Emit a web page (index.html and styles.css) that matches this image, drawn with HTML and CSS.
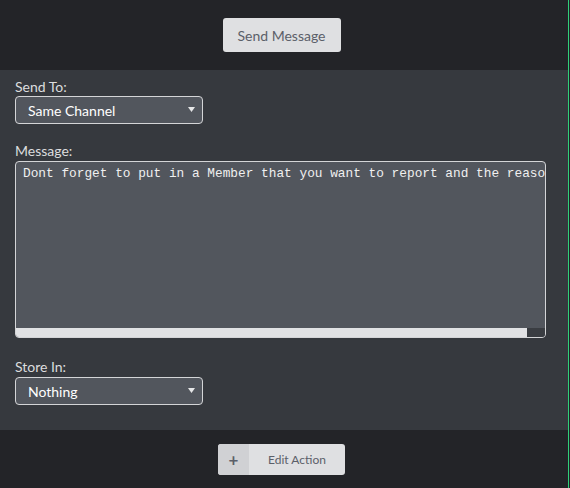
FILE: index.html
```html
<!DOCTYPE html>
<html>
<head>
<meta charset="utf-8">
<link rel="stylesheet" href="styles.css">
</head>
<body>
<div class="page">
  <header class="top">
    <button class="btn send">Send Message</button>
  </header>
  <main class="form">
    <label class="label">Send To:</label>
    <div class="select-wrap">
      <select class="select"><option>Same Channel</option></select>
      <svg class="arrow" width="7" height="5" viewBox="0 0 7 5"><path d="M0 0H7L3.5 5Z" fill="#e6e7e8"/></svg>
    </div>
    <label class="label msg-label">Message:</label>
    <div class="message">
      <div class="message-text">Dont forget to put in a Member that you want to report and the reason why you want to report them.</div>
      <div class="hscroll"><div class="hscroll-track"></div><div class="hscroll-corner"></div></div>
    </div>
    <label class="label store-label">Store In:</label>
    <div class="select-wrap">
      <select class="select"><option>Nothing</option></select>
      <svg class="arrow" width="7" height="5" viewBox="0 0 7 5"><path d="M0 0H7L3.5 5Z" fill="#e6e7e8"/></svg>
    </div>
  </main>
  <footer class="bottom">
    <button class="btn edit"><span class="plus">+</span><span class="edit-text">Edit Action</span></button>
  </footer>
</div>
</body>
</html>
```
FILE: styles.css
```css
html, body {
  margin: 0;
  padding: 0;
}
body {
  width: 570px;
  height: 488px;
  background: #232428;
  font-family: Lato, "Open Sans", sans-serif;
  overflow: hidden;
}
.page {
  width: 568px;
  height: 488px;
  border-right: 1px solid #2fcf7a;
  display: flex;
  flex-direction: column;
}
.top {
  height: 70px;
  background: #232428;
  display: flex;
  justify-content: center;
  align-items: flex-start;
  padding: 18px 5px 0 0;
  box-sizing: border-box;
}
.btn {
  border: none;
  background: #dfe0e2;
  color: #5b5f69;
  font-family: Lato, "Open Sans", sans-serif;
  border-radius: 3px;
  padding: 0;
  cursor: pointer;
}
.send {
  width: 118px;
  height: 34px;
  font-size: 14px;
}
.form {
  height: 360px;
  background: #36393e;
  box-sizing: border-box;
  padding: 8px 22px 0 15px;
  display: flex;
  flex-direction: column;
  align-items: flex-start;
}
.label {
  color: #dcddde;
  font-size: 14px;
  line-height: 18px;
}
.msg-label {
  margin-top: 18px;
  margin-bottom: 1px;
}
.store-label {
  margin-top: 20px;
  margin-bottom: 1px;
}
.select-wrap {
  position: relative;
  width: 188px;
  height: 28px;
}
.select {
  appearance: none;
  -webkit-appearance: none;
  width: 188px;
  height: 28px;
  box-sizing: border-box;
  background: #52565d;
  border: 1px solid #d4d5d7;
  border-radius: 4px;
  color: #ffffff;
  font-family: Lato, "Open Sans", sans-serif;
  font-size: 14px;
  padding: 0 0 0 12px;
  outline: none;
}
.arrow {
  position: absolute;
  right: 8px;
  top: 11px;
}
.message {
  width: 531px;
  height: 177px;
  box-sizing: border-box;
  background: #52565d;
  border: 1px solid #d4d5d7;
  border-radius: 4px;
  display: flex;
  flex-direction: column;
  overflow: hidden;
}
.message-text {
  flex: 1;
  overflow: hidden;
  white-space: pre;
  color: #f0f0f0;
  font-family: "Liberation Mono", "DejaVu Sans Mono", monospace;
  font-size: 12.8px;
  line-height: 16px;
  padding: 4px 0 0 7px;
}
.hscroll {
  height: 9px;
  display: flex;
}
.hscroll-track {
  flex: 1;
  background: #e1e2e4;
}
.hscroll-corner {
  width: 18px;
  background: #3a3d42;
}
.bottom {
  flex: 1;
  background: #232428;
  display: flex;
  justify-content: center;
  align-items: flex-start;
  padding: 14px 5px 0 0;
  box-sizing: border-box;
}
.edit {
  width: 127px;
  height: 31px;
  display: flex;
  align-items: stretch;
  overflow: hidden;
  font-size: 12px;
}
.plus {
  width: 31px;
  background: #d0d1d4;
  display: flex;
  align-items: center;
  justify-content: center;
  font-size: 17px;
  font-weight: bold;
  color: #5b5f69;
}
.edit-text {
  flex: 1;
  display: flex;
  align-items: center;
  justify-content: center;
}
```
